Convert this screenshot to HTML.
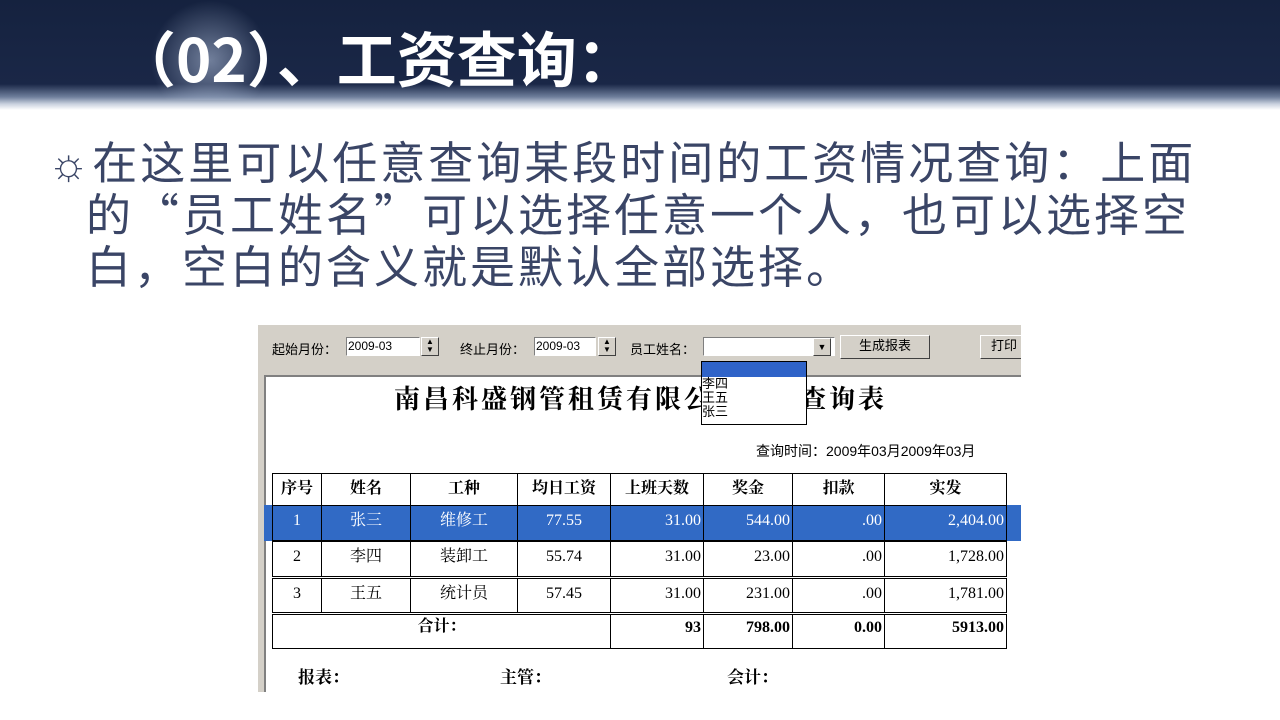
<!DOCTYPE html>
<html><head><meta charset="utf-8"><style>
body{margin:0;width:1280px;height:720px;position:relative;overflow:hidden;background:#fff;font-family:"Liberation Sans","Noto Sans CJK SC",sans-serif}
.ab{position:absolute}
#top{left:0;top:0;width:1280px;height:110px;background:linear-gradient(180deg,#15223f 0,#1a2747 84px,#6f7f9c 97px,#c9d1de 104px,#fff 110px)}
#glow{left:150px;top:0;width:120px;height:100px;background:radial-gradient(ellipse at 50% 60%,rgba(200,215,240,.5),rgba(30,45,80,0) 70%)}
h1{position:absolute;left:116px;top:22px;margin:0;font-size:60px;line-height:70px;color:#fff;font-weight:bold;font-family:"Noto Sans CJK SC",sans-serif;white-space:nowrap}
.p{position:absolute;left:48px;font-size:45px;line-height:52px;letter-spacing:3px;color:#3a4566;white-space:nowrap;font-family:"Noto Sans CJK SC",sans-serif}
#shot{left:258px;top:325px;width:763px;height:367px;background:#d4d0c8;overflow:hidden}
.t{position:absolute;font-size:13px;color:#000;white-space:nowrap}
.in{position:absolute;background:#fff;border:1px solid #7f7f7f;border-right-color:#fff;border-bottom-color:#fff;height:17px}
.btn{position:absolute;background:#d4d0c8;border:1px solid #fff;border-right-color:#404040;border-bottom-color:#404040;font-size:13px;text-align:center;line-height:20px}
#paper{left:6px;top:50px;width:760px;height:320px;background:#fff;border-left:2px solid #808080;border-top:2px solid #808080}
.c{position:absolute;border:1px solid #000;box-sizing:border-box;font-family:"Liberation Serif","Noto Serif CJK SC",serif;font-size:16px;text-align:center;line-height:30px}
.r{text-align:right;padding-right:2px}
</style></head><body>
<div id="top" class="ab"></div><div id="glow" class="ab"></div>
<h1>（02）、工资查询：</h1>
<div class="p" style="top:134px">☼在这里可以任意查询某段时间的工资情况查询：上面</div>
<div class="p" style="top:186px;left:86px">的“员工姓名”可以选择任意一个人，也可以选择空</div>
<div class="p" style="top:238px;left:86px">白，空白的含义就是默认全部选择。</div>
<div id="shot" class="ab">
<div class="t" style="left:14px;top:14px">起始月份：</div>
<div class="in" style="left:88px;top:12px;width:72px"><span class="t" style="left:1px;top:1px;font-size:12px">2009-03</span></div>
<div class="btn" style="left:163px;top:12px;width:16px;height:17px;font-size:8px;line-height:8px">▲<br>▼</div>
<div class="t" style="left:202px;top:14px">终止月份：</div>
<div class="in" style="left:276px;top:12px;width:60px"><span class="t" style="left:1px;top:1px;font-size:12px">2009-03</span></div>
<div class="btn" style="left:340px;top:12px;width:16px;height:17px;font-size:8px;line-height:8px">▲<br>▼</div>
<div class="t" style="left:372px;top:14px">员工姓名：</div>
<div class="in" style="left:445px;top:12px;width:130px"></div>
<div class="btn" style="left:555px;top:13px;width:16px;height:16px;font-size:9px;line-height:16px">▼</div>
<div class="btn" style="left:582px;top:10px;width:88px;height:22px">生成报表</div>
<div class="btn" style="left:722px;top:10px;width:60px;height:22px;text-align:left;padding-left:10px">打印</div>
<div id="paper" class="ab">
<div class="t" style="left:128px;top:2px;font-size:26px;font-family:'Noto Serif CJK SC',serif;letter-spacing:3px;font-weight:bold">南昌科盛钢管租赁有限公司工资查询表</div>
<div class="t" style="left:490px;top:64px;font-size:14px">查询时间：2009年03月2009年03月</div>
</div>
<div class="ab" style="left:443px;top:36px;width:104px;height:62px;background:#fff;border:1px solid #000">
<div style="height:15px;background:#2f63c8"></div>
<div style="font-size:13px;line-height:14px">李四<br>王五<br>张三</div></div>
<div class="ab" style="left:6px;top:180px;width:757px;height:36px;background:#316ac5"></div>
</div>
<div class="c" style="left:272px;top:473px;width:50px;height:33px;font-weight:bold">序号</div>
<div class="c" style="left:321px;top:473px;width:90px;height:33px;font-weight:bold">姓名</div>
<div class="c" style="left:410px;top:473px;width:108px;height:33px;font-weight:bold">工种</div>
<div class="c" style="left:517px;top:473px;width:94px;height:33px;font-weight:bold">均日工资</div>
<div class="c" style="left:610px;top:473px;width:94px;height:33px;font-weight:bold">上班天数</div>
<div class="c" style="left:703px;top:473px;width:90px;height:33px;font-weight:bold">奖金</div>
<div class="c" style="left:792px;top:473px;width:93px;height:33px;font-weight:bold">扣款</div>
<div class="c" style="left:884px;top:473px;width:123px;height:33px;font-weight:bold">实发</div>
<div class="c" style="left:272px;top:505px;width:50px;height:36px;color:#fff">1</div>
<div class="c" style="left:321px;top:505px;width:90px;height:36px;color:#fff">张三</div>
<div class="c" style="left:410px;top:505px;width:108px;height:36px;color:#fff">维修工</div>
<div class="c" style="left:517px;top:505px;width:94px;height:36px;color:#fff">77.55</div>
<div class="c r" style="left:610px;top:505px;width:94px;height:36px;color:#fff">31.00</div>
<div class="c r" style="left:703px;top:505px;width:90px;height:36px;color:#fff">544.00</div>
<div class="c r" style="left:792px;top:505px;width:93px;height:36px;color:#fff">.00</div>
<div class="c r" style="left:884px;top:505px;width:123px;height:36px;color:#fff">2,404.00</div>
<div class="c" style="left:272px;top:541px;width:50px;height:36px">2</div>
<div class="c" style="left:321px;top:541px;width:90px;height:36px">李四</div>
<div class="c" style="left:410px;top:541px;width:108px;height:36px">装卸工</div>
<div class="c" style="left:517px;top:541px;width:94px;height:36px">55.74</div>
<div class="c r" style="left:610px;top:541px;width:94px;height:36px">31.00</div>
<div class="c r" style="left:703px;top:541px;width:90px;height:36px">23.00</div>
<div class="c r" style="left:792px;top:541px;width:93px;height:36px">.00</div>
<div class="c r" style="left:884px;top:541px;width:123px;height:36px">1,728.00</div>
<div class="c" style="left:272px;top:578px;width:50px;height:35px">3</div>
<div class="c" style="left:321px;top:578px;width:90px;height:35px">王五</div>
<div class="c" style="left:410px;top:578px;width:108px;height:35px">统计员</div>
<div class="c" style="left:517px;top:578px;width:94px;height:35px">57.45</div>
<div class="c r" style="left:610px;top:578px;width:94px;height:35px">31.00</div>
<div class="c r" style="left:703px;top:578px;width:90px;height:35px">231.00</div>
<div class="c r" style="left:792px;top:578px;width:93px;height:35px">.00</div>
<div class="c r" style="left:884px;top:578px;width:123px;height:35px">1,781.00</div>
<div class="c" style="left:272px;top:614px;width:339px;height:35px;font-weight:bold;line-height:24px">合计：</div>
<div class="c r" style="left:610px;top:614px;width:94px;height:35px;font-weight:bold;line-height:26px">93</div>
<div class="c r" style="left:703px;top:614px;width:90px;height:35px;font-weight:bold;line-height:26px">798.00</div>
<div class="c r" style="left:792px;top:614px;width:93px;height:35px;font-weight:bold;line-height:26px">0.00</div>
<div class="c r" style="left:884px;top:614px;width:123px;height:35px;font-weight:bold;line-height:26px">5913.00</div>
<div class="t" style="left:298px;top:663px;font-size:17px;font-weight:bold;font-family:'Liberation Serif','Noto Serif CJK SC',serif">报表：</div>
<div class="t" style="left:500px;top:663px;font-size:17px;font-weight:bold;font-family:'Liberation Serif','Noto Serif CJK SC',serif">主管：</div>
<div class="t" style="left:727px;top:663px;font-size:17px;font-weight:bold;font-family:'Liberation Serif','Noto Serif CJK SC',serif">会计：</div>
</body></html>
